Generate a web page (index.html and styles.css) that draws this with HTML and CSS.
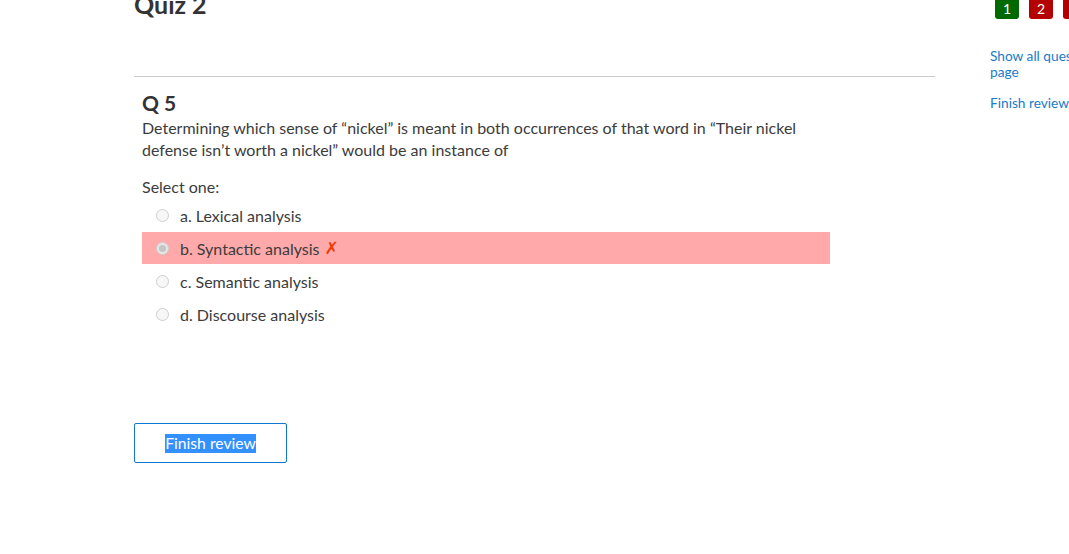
FILE: index.html
```html
<!DOCTYPE html>
<html>
<head>
<meta charset="utf-8">
<link rel="stylesheet" href="styles.css">
</head>
<body>
<div class="page">
  <main class="main">
    <h1 class="quiz-title">Quiz 2</h1>
    <hr class="rule">
    <section class="question">
      <h2 class="qno">Q 5</h2>
      <p class="qtext">Determining which sense of “nickel” is meant in both occurrences of that word in “Their nickel defense isn’t worth a nickel” would be an instance of</p>
      <p class="prompt">Select one:</p>
      <div class="options">
        <div class="option"><span class="radio"></span><span class="label">a. Lexical analysis</span></div>
        <div class="option wrong"><span class="radio checked"></span><span class="label">b. Syntactic analysis</span><span class="xmark">✗</span></div>
        <div class="option"><span class="radio"></span><span class="label">c. Semantic analysis</span></div>
        <div class="option"><span class="radio"></span><span class="label">d. Discourse analysis</span></div>
      </div>
    </section>
    <button class="finish-btn"><span class="sel">Finish review</span></button>
  </main>
  <aside class="sidebar">
    <div class="navbtns">
      <span class="nb green">1</span>
      <span class="nb red">2</span>
      <span class="nb red">3</span>
    </div>
    <a class="slink first">Show all questions on one page</a>
    <a class="slink">Finish review</a>
  </aside>
</div>
</body>
</html>
```

FILE: styles.css
```css
html, body {
  margin: 0;
  padding: 0;
  overflow: hidden;
  background: #fff;
}
body {
  font-family: "Lato", "Liberation Sans", sans-serif;
  color: #3c3c3c;
  width: 1069px;
  height: 554px;
}
.page {
  display: flex;
  align-items: flex-start;
}
.main {
  margin-left: 134px;
  width: 801px;
  flex: none;
}
.quiz-title {
  margin: -11px 0 0 0;
  font-size: 25px;
  line-height: 30px;
  font-weight: 700;
  color: #333;
}
.rule {
  margin: 57px 0 0 0;
  border: 0;
  border-top: 1px solid #cccccc;
  height: 0;
}
.question {
  padding-left: 8px;
  padding-top: 14px;
}
.qno {
  margin: 0;
  font-size: 21px;
  line-height: 24px;
  font-weight: 700;
  color: #333;
}
.qtext {
  margin: 2px 0 0 0;
  width: 670px;
  font-size: 16px;
  line-height: 22px;
}
.prompt {
  margin: 15px 0 0 0;
  font-size: 16px;
  line-height: 22px;
}
.options {
  margin-top: 1px;
  display: flex;
  flex-direction: column;
  gap: 1px;
  width: 688px;
}
.option {
  height: 32px;
  display: flex;
  align-items: center;
  padding-left: 14px;
  font-size: 16px;
}
.option.wrong {
  background: #ffa9aa;
}
.radio {
  width: 11px;
  height: 11px;
  border-radius: 50%;
  border: 1px solid #cfcfcf;
  background: #f7f7f7;
  box-sizing: content-box;
  flex: none;
  position: relative;
}
.radio.checked {
  background: #e6e6e6;
}
.radio.checked::after {
  content: "";
  position: absolute;
  left: 2px;
  top: 2px;
  width: 7px;
  height: 7px;
  border-radius: 50%;
  background: #c4c4c4;
}
.label {
  margin-left: 11px;
}
.xmark {
  margin-left: 5px;
  color: #ee3b05;
  font-family: "DejaVu Sans", sans-serif;
  font-size: 17px;
  font-weight: bold;
}
.finish-btn {
  margin-top: 93px;
  width: 153px;
  height: 40px;
  border: 1px solid #1177d1;
  border-radius: 2px;
  background: #fff;
  padding: 0;
  font-family: inherit;
  font-size: 15.7px;
  display: flex;
  align-items: center;
  justify-content: center;
}
.sel {
  background: #3390ff;
  color: #fff;
  line-height: 19px;
}
.sidebar {
  margin-left: 55px;
  width: 180px;
  flex: none;
  display: flex;
  flex-direction: column;
}
.navbtns {
  display: flex;
  gap: 10px;
  padding-left: 5px;
}
.nb {
  width: 24px;
  height: 19px;
  border-radius: 0 0 3px 3px;
  color: #fff;
  font-size: 14px;
  line-height: 18px;
  text-align: center;
  flex: none;
}
.nb.green { background: #006a00; }
.nb.red { background: #b30000; }
.slink {
  color: #1a7bc9;
  font-size: 13.7px;
  line-height: 16px;
  display: block;
}
.slink.first {
  margin-top: 29px;
  width: 175px;
}
.slink + .slink {
  margin-top: 15px;
}
```
